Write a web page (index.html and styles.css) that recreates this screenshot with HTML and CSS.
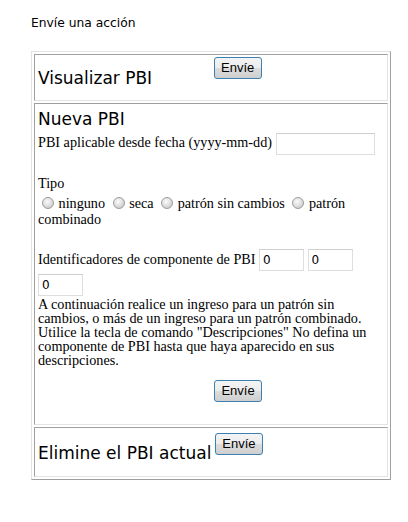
FILE: index.html
```html
<!DOCTYPE html>
<html lang="es">
<head>
  <meta charset="UTF-8">
  <title>Envíe una acción</title>
  <link rel="stylesheet" href="styles.css">
</head>
<body>
  <div class="page">
    <p class="title">Envíe una acción</p>
    <table class="actions">
      <tr>
        <td class="cell cell-show">
          <span class="heading">Visualizar PBI</span>
          <button class="btn btn-far">Envíe</button>
        </td>
      </tr>
      <tr>
        <td class="cell cell-form">
          <div class="heading">Nueva PBI</div>
          <div class="line">PBI aplicable desde fecha (yyyy-mm-dd) <input class="field field-date" type="text"></div>
          <div class="group">
            <div class="label">Tipo</div>
            <div class="options">
              <input type="radio" name="tipo"> ninguno
              <input type="radio" name="tipo"> seca
              <input type="radio" name="tipo"> patrón sin cambios
              <input type="radio" name="tipo"> patrón combinado
            </div>
          </div>
          <div class="group group-ids">Identificadores de componente de PBI <input class="field field-id" type="text" value="0"> <input class="field field-id" type="text" value="0"> <input class="field field-id" type="text" value="0"></div>
          <p class="note">A continuación realice un ingreso para un patrón sin cambios, o más de un ingreso para un patrón combinado. Utilice la tecla de comando "Descripciones" No defina un componente de PBI hasta que haya aparecido en sus descripciones.</p>
          <div class="submit"><button class="btn">Envíe</button></div>
        </td>
      </tr>
      <tr>
        <td class="cell cell-delete">
          <span class="heading">Elimine el PBI actual</span>
          <button class="btn">Envíe</button>
        </td>
      </tr>
    </table>
  </div>
</body>
</html>
```

FILE: styles.css
```css
html,body{
  margin: 0;
  padding: 0;
  background: #fff;
}
body{
  font-family: "Liberation Serif", serif;
  font-size: 14.2px;
  color: #000;
}
.page{
  padding: 16px 0 0 31px;
  width: 360px;
}
.title{
  margin: 0 0 20px;
  font-family: "DejaVu Sans", Verdana, sans-serif;
  font-size: 12.3px;
  line-height: 15px;
}
.actions{
  width: 360px;
  border-collapse: separate;
  border-spacing: 2px;
  border: 1px solid;
  border-color: #e3e3e3 #a0a0a0 #a0a0a0 #e3e3e3;
}
.cell{
  border: 1px solid;
  border-color: #a0a0a0 #e3e3e3 #e3e3e3 #a0a0a0;
  padding: 2px 0 12px 3px;
  vertical-align: top;
}
.heading{
  font-family: "DejaVu Sans", Verdana, sans-serif;
  font-size: 17px;
  line-height: 20px;
}
.cell-show .heading,.cell-delete .heading{
  display: inline-block;
  padding-top: 11px;
}
.cell-delete{
  padding-top: 5px;
  padding-bottom: 13px;
}
.cell-delete .heading{
  padding-top: 10px;
}
.cell-form{
  padding-bottom: 22px;
}
.cell-form .heading{
  padding-top: 3px;
}
.btn{
  font-family: "Liberation Sans", Arial, sans-serif;
  font-size: 13px;
  height: 22px;
  width: 48px;
  padding: 0 0 2px;
  border: 1px solid #3c7fb1;
  border-radius: 3px;
  background: linear-gradient(#f4f4f4 0%, #ececec 50%, #dcdcdc 51%, #cfcfcf 100%);
  vertical-align: top;
  margin: 0;
}
.btn-far{
  margin-left: 58px;
}
.line{
  margin-top: 2px;
  line-height: 23px;
}
.field{
  font-family: "DejaVu Sans", Verdana, sans-serif;
  font-size: 12px;
  height: 22px;
  box-sizing: border-box;
  border: 1px solid #dedede;
  border-top-color: #cfcfcf;
  padding: 1px 3px;
  vertical-align: middle;
}
.field-date{
  width: 99px;
}
.field-id{
  width: 45px;
  margin: 0;
}
.group{
  margin-top: 20px;
}
.label{
  line-height: 17px;
}
.options{
  margin-top: 3px;
  line-height: 16px;
}
.options input[type=radio]{
  appearance: none;
  width: 12px;
  height: 12px;
  margin: 0 1px 0 4px;
  border: 1px solid #9c9c9c;
  border-radius: 50%;
  background: radial-gradient(circle at 40% 35%, #fafafa 0%, #e2e2e2 45%, #bdbdbd 100%);
  vertical-align: -1px;
}
.group-ids{
  line-height: 24px;
}
.note{
  margin: 1px 0 0;
  line-height: 14px;
}
.submit{
  padding-left: 176px;
  margin-top: 13px;
}
```
